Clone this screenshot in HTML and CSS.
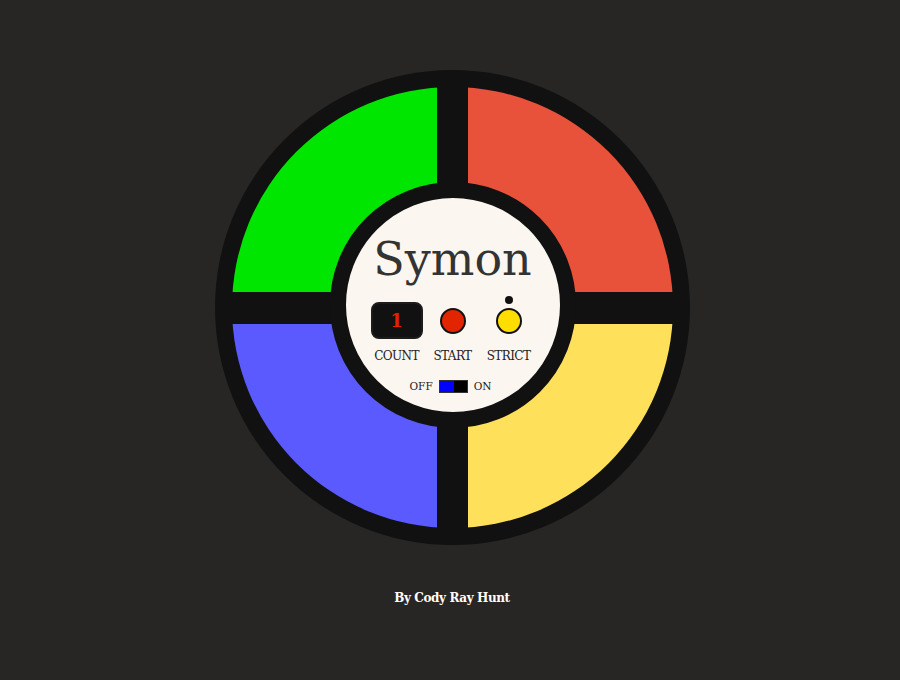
FILE: index.html
```html
<!DOCTYPE html>
<html lang="en">
<head>
<meta charset="utf-8">
<title>Symon</title>
<link rel="stylesheet" href="styles.css">
</head>
<body>
<main class="page">
  <div class="board">
    <div class="pads">
      <div class="pad pad-green"></div>
      <div class="pad pad-red"></div>
      <div class="pad pad-blue"></div>
      <div class="pad pad-yellow"></div>
    </div>
    <div class="hub">
      <h1 class="title">Symon</h1>
      <div class="controls">
        <div class="count"><span>1</span></div>
        <div class="btn btn-start"></div>
        <div class="btn btn-strict"><span class="led"></span></div>
      </div>
      <div class="labels">
        <span>COUNT</span>
        <span>START</span>
        <span>STRICT</span>
      </div>
      <div class="power">
        <span>OFF</span>
        <div class="switch"><div class="knob"></div></div>
        <span>ON</span>
      </div>
    </div>
  </div>
  <footer class="credit">By Cody Ray Hunt</footer>
</main>
</body>
</html>
```

FILE: styles.css
```css
html, body {
  margin: 0;
  background: #282624;
  height: 100%;
}

.page {
  display: flex;
  flex-direction: column;
  align-items: center;
  padding: 70px 0 0 4px;
  font-family: "DejaVu Serif", "Liberation Serif", serif;
}

.board {
  position: relative;
  width: 475px;
  height: 475px;
  box-sizing: border-box;
  padding: 17px;
  border-radius: 50%;
  background: #111111;
}

.pads {
  width: 441px;
  height: 441px;
  border-radius: 50%;
  overflow: hidden;
  display: grid;
  grid-template-columns: 1fr 1fr;
  grid-template-rows: 1fr 1fr;
  column-gap: 31px;
  row-gap: 32px;
}

.pad-green { background: #00e600; }
.pad-red { background: #e8523a; }
.pad-blue { background: #5a5aff; }
.pad-yellow { background: #ffe05a; }

.hub {
  position: absolute;
  top: 111.5px;
  left: 115px;
  width: 246px;
  height: 246px;
  box-sizing: border-box;
  border: 16px solid #111111;
  border-radius: 50%;
  background: #fcf6f0;
  display: flex;
  flex-direction: column;
  align-items: center;
}

.title {
  margin: 38.5px 0 0;
  font-size: 46px;
  line-height: 46px;
  font-weight: normal;
  color: #333333;
}

.controls {
  margin-top: 20px;
  display: grid;
  grid-template-columns: repeat(3, 56px);
  justify-items: center;
  align-items: center;
  height: 37px;
}

.count {
  width: 52px;
  height: 37px;
  box-sizing: border-box;
  border: 2px solid #1c1c1c;
  border-radius: 8px;
  background: #111111;
  display: flex;
  align-items: center;
  justify-content: center;
  color: #e02200;
  font-size: 18px;
  font-weight: bold;
}

.btn {
  position: relative;
  width: 26px;
  height: 26px;
  box-sizing: border-box;
  border: 2px solid #111111;
  border-radius: 50%;
}

.btn-start { background: #e22400; }
.btn-strict { background: #ffdd00; }

.led {
  position: absolute;
  top: -14px;
  left: 50%;
  width: 8px;
  height: 8px;
  margin-left: -4px;
  border-radius: 50%;
  background: #111111;
}

.labels {
  margin-top: 10px;
  display: grid;
  grid-template-columns: repeat(3, 56px);
  justify-items: center;
  font-size: 12px;
  line-height: 14px;
  letter-spacing: -0.6px;
  color: #222222;
}

.power {
  margin: 16px 4px 0 0;
  display: flex;
  align-items: center;
  gap: 6px;
  font-size: 10.5px;
  line-height: 14px;
  color: #222222;
}

.switch {
  width: 29px;
  height: 13px;
  box-sizing: border-box;
  border: 1px solid #333333;
  background: #000000;
  display: flex;
}

.knob {
  width: 14px;
  background: #0000ff;
}

.credit {
  margin-top: 45px;
  font-size: 12px;
  line-height: 16px;
  letter-spacing: -0.4px;
  font-weight: bold;
  color: #ffffff;
}
```
